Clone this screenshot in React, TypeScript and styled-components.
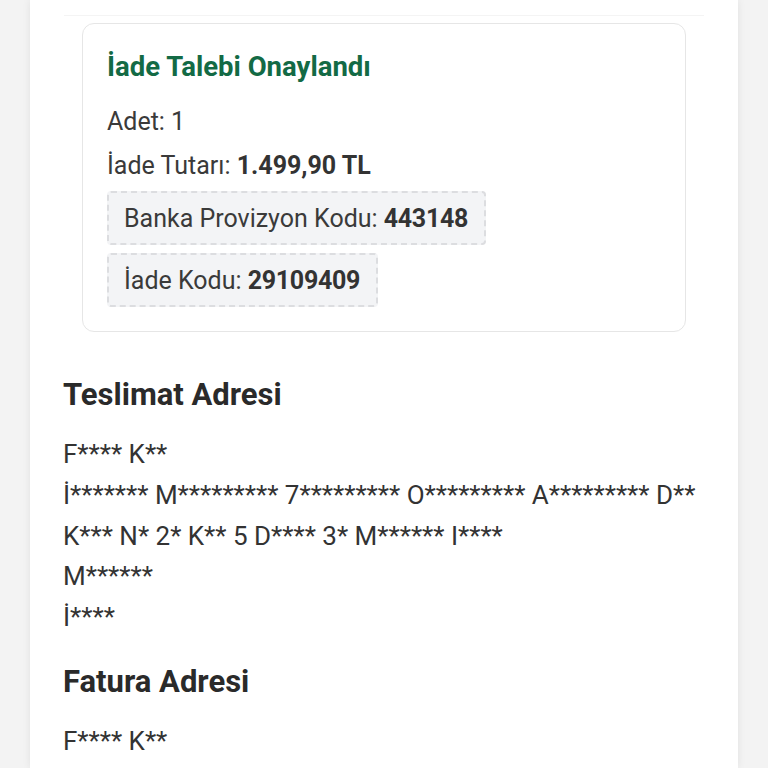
import styled, { createGlobalStyle } from "styled-components";

const GlobalStyle = createGlobalStyle`
  body {
    margin: 0;
    background: #f3f3f3;
    font-family: Roboto, "Noto Sans", Arial, sans-serif;
    color: #333;
  }
`;

const Page = styled.div`
  display: flex;
  min-height: 768px;
  overflow: hidden;
`;

const Panel = styled.main`
  margin-left: 30px;
  width: 708px;
  background: #fff;
  box-shadow: 0 0 8px rgba(0, 0, 0, 0.08);
  padding-top: 15px;
`;

const Divider = styled.hr`
  margin: 0 34px 7px;
  border: none;
  border-top: 1px solid #f4f4f4;
`;

const RefundCard = styled.section`
  margin: 0 52px;
  padding: 26px 24px 24px;
  border: 1px solid #e6e6e6;
  border-radius: 12px;
  display: flex;
  flex-direction: column;
  align-items: flex-start;
`;

const CardTitle = styled.h2`
  margin: 0 0 16px;
  font-size: 27.5px;
  line-height: 34px;
  font-weight: 700;
  color: #136a45;
`;

const InfoLine = styled.div`
  font-size: 25px;
  line-height: 44px;
  color: #3a3a3a;

  b {
    color: #333;
  }
`;

const CodeChip = styled.div<{ $gap?: number }>`
  margin-top: ${(p) => p.$gap ?? 0}px;
  padding: 0 16px 0 15px;
  height: 54px;
  box-sizing: border-box;
  display: flex;
  align-items: center;
  white-space: pre;
  background: #f3f4f6;
  border: 2px dashed #dcdde0;
  border-radius: 4px;
  font-size: 25px;
  color: #3a3a3a;

  b {
    color: #333;
    letter-spacing: -0.3px;
  }
`;

const Section = styled.section`
  padding: 43px 33px 0;

  & + & {
    padding-top: 24px;
  }
`;

const SectionTitle = styled.h3`
  margin: 0 0 19px;
  font-size: 31px;
  line-height: 40px;
  font-weight: 700;
  color: #2a2a2a;
`;

const AddressLine = styled.div`
  font-size: 26px;
  line-height: 40.75px;
  color: #333;
`;

const delivery = [
  "F**** K**",
  "İ******* M********* 7********* O********* A********* D**",
  "K*** N* 2* K** 5 D**** 3* M****** I****",
  "M******",
  "İ****",
];

const billing = ["F**** K**"];

export default function App() {
  return (
    <Page>
      <GlobalStyle />
      <Panel>
        <Divider />
        <RefundCard>
          <CardTitle>İade Talebi Onaylandı</CardTitle>
          <InfoLine>Adet: 1</InfoLine>
          <InfoLine>
            İade Tutarı: <b>1.499,90 TL</b>
          </InfoLine>
          <CodeChip $gap={3}>
            Banka Provizyon Kodu: <b>443148</b>
          </CodeChip>
          <CodeChip $gap={8}>
            İade Kodu: <b>29109409</b>
          </CodeChip>
        </RefundCard>
        <Section>
          <SectionTitle>Teslimat Adresi</SectionTitle>
          {delivery.map((line, i) => (
            <AddressLine key={i}>{line}</AddressLine>
          ))}
        </Section>
        <Section>
          <SectionTitle>Fatura Adresi</SectionTitle>
          {billing.map((line, i) => (
            <AddressLine key={i}>{line}</AddressLine>
          ))}
        </Section>
      </Panel>
    </Page>
  );
}
